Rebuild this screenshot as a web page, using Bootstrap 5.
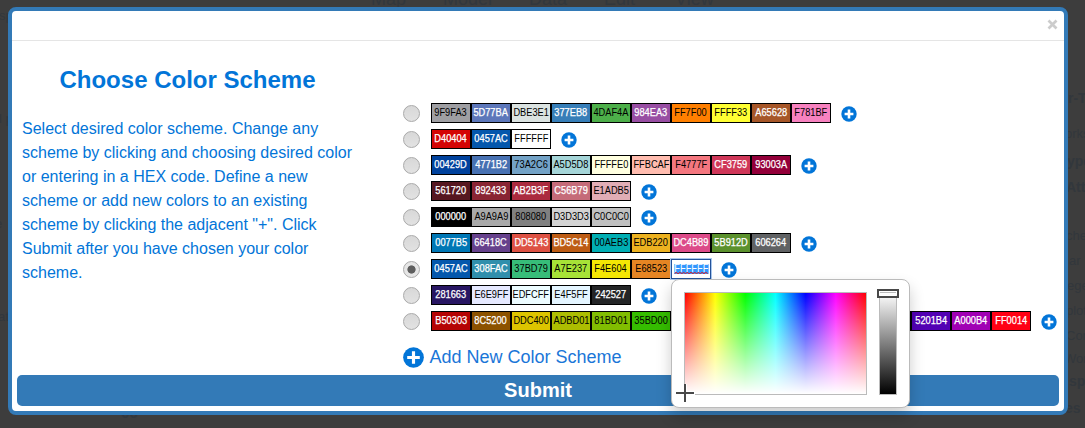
<!DOCTYPE html>
<html lang="en">
<head>
<meta charset="utf-8">
<title>Choose Color Scheme</title>
<link href="https://cdn.jsdelivr.net/npm/bootstrap@5.3.0/dist/css/bootstrap.min.css" rel="stylesheet">
<style>
body{background:#3d3d3d;font-family:"Liberation Sans",Arial,sans-serif;height:428px;overflow:hidden;position:relative}
.ghost{position:absolute;color:#32373c;white-space:nowrap;line-height:1}
.dialog-box{width:1060px;height:408px;margin:7px 0 0 8px;border:4px solid #337ab7;border-radius:8px;position:relative}
.dialog-head{height:30px;border-bottom:1px solid #e5e5e5;padding:0 6px 2px 0}
.x-icon{width:11px;height:11px}
.dialog-main{height:334px}
.intro{width:351px;padding:24px 10px 0;color:#0275d8}
.intro h1{font-size:24px;font-weight:700;line-height:29px;margin:0 0 23px;text-align:center}
.intro p{font-size:16px;line-height:24px;white-space:nowrap;margin:0}
.schemes{padding:62px 0 0 40px}
.scheme{height:26px}
.dial{width:17px;height:17px;border-radius:50%;border:1px solid #a9a9a9;background:linear-gradient(#d8d8d8,#e2e2e2);margin-right:11px;flex:none;margin-top:2px}
.dial.on{background:radial-gradient(circle,#5e5e5e 0 3.7px,#e6e6e6 4.5px)}
.sw{width:40px;height:20px;border:1px solid #000;font-size:10px;line-height:18px;display:flex;justify-content:center;flex:none;color:#000;white-space:nowrap}
.sw span{display:block;transform:scaleX(.925)}
.sw.lt{color:#fff;-webkit-text-stroke:.25px #fff}
.sw.act{border-color:#24529a;outline:1px solid #a9c8ee;align-items:flex-start;padding-top:4px}
.sw.act span{position:relative;background:#3297fd;color:#fff;line-height:10px;height:10px}
.sw.act svg{position:absolute;left:0;top:7px}
.plus{width:16px;height:16px;margin:2.500px 0 0 9.500px;flex:none}
.add-line{height:24px;margin-top:8px;color:#1a76d8;font-size:18px;line-height:24px}
.add-line span{padding-left:5.500px}
.submit-bar{width:1042px;height:31px;margin:0 5px;background:#337ab7;color:#fff;font-size:20px;font-weight:700;line-height:31px;border-radius:5px;padding:0;border:0}
.picker{position:absolute;left:659px;top:268px;width:239px;height:129px;border:1px solid #bbb;border-radius:8px;background:#fff;box-shadow:0 8px 15px rgba(0,0,0,.2);padding:12px}
.pad{width:183px;height:103px;border:1px solid #bbb;background:linear-gradient(rgba(255,255,255,0),#fff),linear-gradient(90deg,red,#ff0 16.67%,#0f0 33.33%,#0ff 50%,#00f 66.67%,#f0f 83.33%,red)}
.shade{width:18px;height:103px;border:1px solid #bbb;background:linear-gradient(#fff,#000);margin-left:12px}
.picker svg{position:absolute}
</style>
</head>
<body>
<div aria-hidden="true" id="ghosts"></div>
<div class="dialog-box bg-white">
  <div class="dialog-head d-flex justify-content-end align-items-center">
    <svg class="x-icon" viewBox="0 0 11 11"><path d="M1.500 1.500 9.500 9.500M9.500 1.500 1.500 9.500" stroke="#ccc" stroke-width="2.700"/></svg>
  </div>
  <div class="dialog-main d-flex">
    <div class="intro flex-shrink-0">
      <h1>Choose Color Scheme</h1>
      <p>Select desired color scheme. Change any<br>scheme by clicking and choosing desired color<br>or entering in a HEX code. Define a new<br>scheme or add new colors to an existing<br>scheme by clicking the adjacent "+". Click<br>Submit after you have chosen your color<br>scheme.</p>
    </div>
    <div class="schemes">
      <div id="rows"></div>
      <div class="add-line d-flex align-items-center"><svg width="21" height="21" viewBox="0 0 16 16"><circle cx="8" cy="8" r="7.900" fill="#0275d8"/><path d="M8 3.200v9.600M3.200 8h9.600" stroke="#fff" stroke-width="2.400"/></svg><span>Add New Color Scheme</span></div>
    </div>
  </div>
  <button class="submit-bar d-block">Submit</button>
  <div class="picker d-flex">
    <div class="pad"></div>
    <div class="shade"></div>
    <svg style="left:4px;top:104px" width="19" height="19"><path d="M9 0v19M0 9h19" stroke="#fff" stroke-width="4"/><path d="M9 0v18M0 9h18" stroke="#484848" stroke-width="2"/></svg>
    <svg style="left:205px;top:9px" width="22" height="10"><path d="M1 1h20v7H1z" fill="none" stroke="#484848" stroke-width="2"/><path d="M2.500 2.500h17v4h-17z" fill="none" stroke="#fff"/></svg>
  </div>
</div>
<script>
const rows=[
 "9F9FA3 5D77BA* DBE3E1 377EB8* 4DAF4A 984EA3* FF7F00 FFFF33 A65628* F781BF",
 "D40404* 0457AC* FFFFFF",
 "00429D* 4771B2* 73A2C6 A5D5D8 FFFFE0 FFBCAF F4777F CF3759* 93003A*",
 "561720* 892433* AB2B3F* C56B79* E1ADB5",
 "000000* A9A9A9 808080 D3D3D3 C0C0C0",
 "0077B5* 66418C* DD5143* BD5C14* 00AEB3 EDB220 DC4B89* 5B912D* 606264*",
 "0457AC* 308FAC* 37BD79 A7E237 F4E604 E68523 FFFFFF!",
 "281663* E6E9FF EDFCFF E4F5FF 242527*",
 "B50303* 8C5200* DDC400 ADBD01 81BD01 35BD00 _ 5201B4* A000B4* FF0014*"];
const plus='<svg class="plus" viewBox="0 0 16 16"><circle cx="8" cy="8" r="7.700" fill="#0275d8"/><path d="M8 3.600v8.800M3.600 8h8.800" stroke="#fff" stroke-width="2.600"/></svg>';
const wave='<svg width="37" height="4"><path d="M0 3l2-2 2 2 2-2 2 2 2-2 2 2 2-2 2 2 2-2 2 2 2-2 2 2 2-2 2 2 2-2 2 2 2-2 2 2" fill="none" stroke="#e0202a"/></svg>';
document.getElementById("rows").innerHTML=rows.map((r,i)=>'<div class="scheme d-flex align-items-start"><span class="dial'+(i==6?' on':'')+'"></span>'+r.split(" ").map(c=>{
 if(c=="_")return '<div class="sw" style="width:240px"></div>';
 const h=c.slice(0,6),f=c[6];
 return '<div class="sw'+(f=="*"?" lt":f=="!"?" act":"")+'" style="background:#'+h+'"><span>'+h+(f=="!"?wave:"")+'</span></div>';
}).join("")+plus+'</div>').join("");
const g=[[371,-10,18,"Map"],[443,-10,18,"Model"],[529,-10,18,"Data"],[604,-10,18,"Edit"],[675,-10,18,"View"],
 [1068,91,14,"r-T",1],[1065,127,13,"orks"],[1067,154,14,"ype",1],[1066,180,14,"Attr",1],[1066,229,13,"che"],[1069,254,13,"ar I"],[1067,279,13,"ege"],[1066,304,13,"plot"],[1066,329,13,"Com"],[1064,352,13,"Wor"],[1069,374,14,"spla",1],[1065,401,14,"es",1],
 [-1,9,13,"sp"],[-1,112,13,"l p"],[-5,217,13,"e"],[-2,310,13,"ate"],[121,405,15,"06",1]];
document.getElementById("ghosts").innerHTML=g.map(a=>'<span class="ghost" style="left:'+a[0]+'px;top:'+a[1]+'px;font-size:'+a[2]+'px;font-weight:'+(a[4]?700:400)+'">'+a[3]+'</span>').join("");
</script>
<script src="https://cdn.jsdelivr.net/npm/bootstrap@5.3.0/dist/js/bootstrap.bundle.min.js"></script>
</body>
</html>
